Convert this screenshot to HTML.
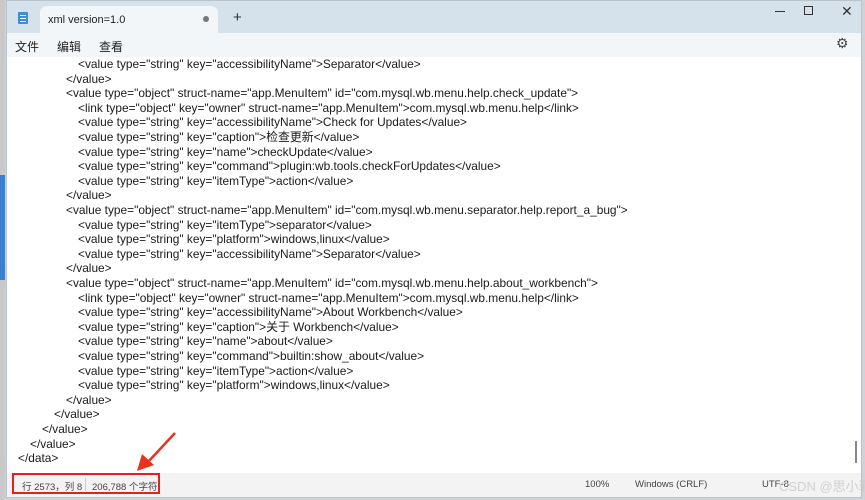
<!DOCTYPE html>
<html><head><meta charset="utf-8"><style>
*{margin:0;padding:0;box-sizing:border-box}
body{width:865px;height:500px;overflow:hidden;background:#cfd3d8;font-family:"Liberation Sans","Noto Sans CJK SC",sans-serif;position:relative}
.strip{position:absolute;left:0;top:0;width:5px;height:500px;background:#c9c9c9}
.win{position:absolute;left:6px;top:0;width:856px;height:498px;background:#d5e2ec;border:1px solid #b8c3cc}
.tab{position:absolute;left:33px;top:5px;width:178px;height:28px;background:#f3f6f9;border-radius:7px 7px 0 0;font-size:11px;color:#222}
.menu{position:absolute;left:0;top:32px;width:854px;height:24px;background:#f3f6f9;font-size:12px;color:#222}
.menu span{position:absolute;top:5px}
.edit{position:absolute;left:0;top:56px;width:854px;height:416px;background:#fff}
.l{position:absolute;font-size:11.9px;color:#1a1a1a;white-space:pre;line-height:14px}
.status{position:absolute;left:0;top:472px;width:854px;height:24px;background:#f3f3f3;font-size:9.5px;color:#444}
.status span{position:absolute;top:6px;white-space:nowrap}
</style></head><body>
<div class="strip"></div>
<div style="position:absolute;left:0;top:175px;width:5px;height:105px;background:#3c7fd0"></div>
<div class="win">
 <svg style="position:absolute;left:10px;top:10px" width="12" height="14"><rect x="1" y="1" width="10" height="12" fill="#3a8fd8" rx="1"/><rect x="3" y="4" width="6" height="1" fill="#fff"/><rect x="3" y="7" width="6" height="1" fill="#fff"/><rect x="3" y="10" width="6" height="1" fill="#fff"/></svg>
 <div class="tab"><span style="position:absolute;left:8px;top:8px">xml version=1.0</span><span style="position:absolute;left:163px;top:10px;width:6px;height:6px;border-radius:3px;background:#777"></span></div>
 <div style="position:absolute;left:226px;top:8px;font-size:15px;color:#333">+</div>
 <div style="position:absolute;left:768px;top:10px;width:10px;height:1px;background:#333"></div>
 <div style="position:absolute;left:797px;top:5px;width:9px;height:9px;border:1px solid #333"></div>
 <div style="position:absolute;left:834px;top:2px;font-size:14px;color:#333">✕</div>
 <div class="menu"><span style="left:8px">文件</span><span style="left:50px">编辑</span><span style="left:92px">查看</span><span style="left:829px;font-size:14px;top:2px;color:#444">⚙</span></div>
 <div class="edit">
<div class="l" style="left:71px;top:0px">&lt;value type="string" key="accessibilityName"&gt;Separator&lt;/value&gt;</div>
<div class="l" style="left:59px;top:14.6px">&lt;/value&gt;</div>
<div class="l" style="left:59px;top:29.2px">&lt;value type="object" struct-name="app.MenuItem" id="com.mysql.wb.menu.help.check_update"&gt;</div>
<div class="l" style="left:71px;top:43.8px">&lt;link type="object" key="owner" struct-name="app.MenuItem"&gt;com.mysql.wb.menu.help&lt;/link&gt;</div>
<div class="l" style="left:71px;top:58.4px">&lt;value type="string" key="accessibilityName"&gt;Check for Updates&lt;/value&gt;</div>
<div class="l" style="left:71px;top:73px">&lt;value type="string" key="caption"&gt;检查更新&lt;/value&gt;</div>
<div class="l" style="left:71px;top:87.6px">&lt;value type="string" key="name"&gt;checkUpdate&lt;/value&gt;</div>
<div class="l" style="left:71px;top:102.2px">&lt;value type="string" key="command"&gt;plugin:wb.tools.checkForUpdates&lt;/value&gt;</div>
<div class="l" style="left:71px;top:116.8px">&lt;value type="string" key="itemType"&gt;action&lt;/value&gt;</div>
<div class="l" style="left:59px;top:131.4px">&lt;/value&gt;</div>
<div class="l" style="left:59px;top:146px">&lt;value type="object" struct-name="app.MenuItem" id="com.mysql.wb.menu.separator.help.report_a_bug"&gt;</div>
<div class="l" style="left:71px;top:160.6px">&lt;value type="string" key="itemType"&gt;separator&lt;/value&gt;</div>
<div class="l" style="left:71px;top:175.2px">&lt;value type="string" key="platform"&gt;windows,linux&lt;/value&gt;</div>
<div class="l" style="left:71px;top:189.8px">&lt;value type="string" key="accessibilityName"&gt;Separator&lt;/value&gt;</div>
<div class="l" style="left:59px;top:204.4px">&lt;/value&gt;</div>
<div class="l" style="left:59px;top:219px">&lt;value type="object" struct-name="app.MenuItem" id="com.mysql.wb.menu.help.about_workbench"&gt;</div>
<div class="l" style="left:71px;top:233.6px">&lt;link type="object" key="owner" struct-name="app.MenuItem"&gt;com.mysql.wb.menu.help&lt;/link&gt;</div>
<div class="l" style="left:71px;top:248.2px">&lt;value type="string" key="accessibilityName"&gt;About Workbench&lt;/value&gt;</div>
<div class="l" style="left:71px;top:262.8px">&lt;value type="string" key="caption"&gt;关于 Workbench&lt;/value&gt;</div>
<div class="l" style="left:71px;top:277.4px">&lt;value type="string" key="name"&gt;about&lt;/value&gt;</div>
<div class="l" style="left:71px;top:292px">&lt;value type="string" key="command"&gt;builtin:show_about&lt;/value&gt;</div>
<div class="l" style="left:71px;top:306.6px">&lt;value type="string" key="itemType"&gt;action&lt;/value&gt;</div>
<div class="l" style="left:71px;top:321.2px">&lt;value type="string" key="platform"&gt;windows,linux&lt;/value&gt;</div>
<div class="l" style="left:59px;top:335.8px">&lt;/value&gt;</div>
<div class="l" style="left:47px;top:350.4px">&lt;/value&gt;</div>
<div class="l" style="left:35px;top:365px">&lt;/value&gt;</div>
<div class="l" style="left:23px;top:379.6px">&lt;/value&gt;</div>
<div class="l" style="left:11px;top:394.2px">&lt;/data&gt;</div>
<div style="position:absolute;left:848px;top:384px;width:2px;height:22px;background:#888"></div>
 </div>
 <div class="status">
  <span style="left:15px">行 2573，列 8</span>
  <span style="left:78px;top:5px;width:1px;height:13px;background:#ccc"></span>
  <span style="left:85px">206,788 个字符</span>
  <span style="left:578px">100%</span>
  <span style="left:628px">Windows (CRLF)</span>
  <span style="left:755px">UTF-8</span>
  <span style="left:772px;top:3px;font-size:13px;color:rgba(200,200,200,.8)">CSDN @思小菲</span>
 </div>
</div>
<div style="position:absolute;left:12px;top:473px;width:148px;height:21px;border:2px solid #e0241b"></div>
<svg style="position:absolute;left:0;top:0" width="865" height="500"><line x1="175" y1="433" x2="148" y2="462" stroke="#e8321f" stroke-width="2.5"/><polygon points="137,471 142,454 154,465" fill="#e8321f"/></svg>
</body></html>
